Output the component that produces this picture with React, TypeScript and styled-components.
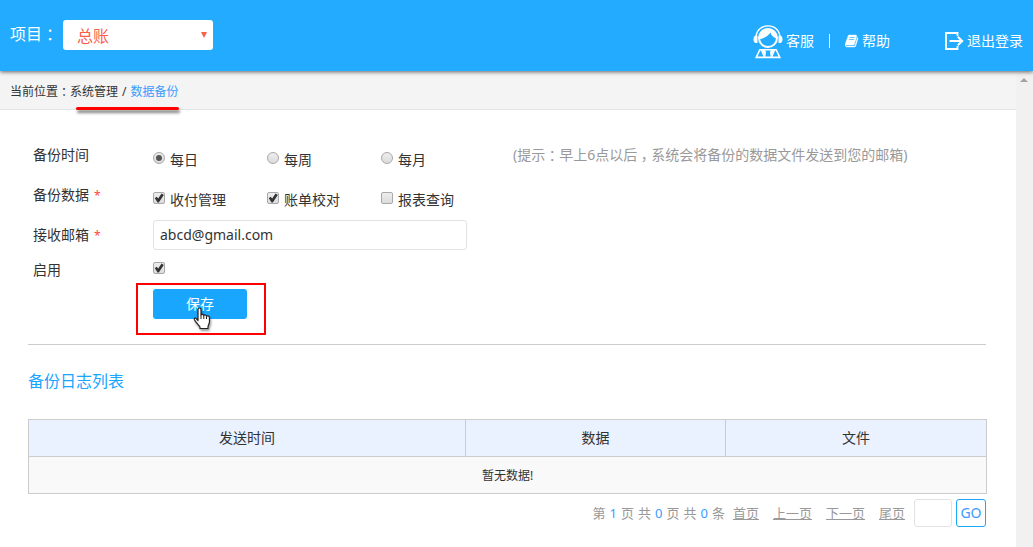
import React from "react";
import styled, { createGlobalStyle } from "styled-components";

const GlobalStyle = createGlobalStyle`
  *, *::before, *::after { box-sizing: border-box; }
  body {
    margin: 0;
    background: #fff;
    color: #333;
    font: 14px/20px "Noto Sans", "Noto Sans CJK SC", sans-serif;
  }
  a { color: inherit; text-decoration: none; }
  button, input, select { font: inherit; margin: 0; }
`;

const Page = styled.div`
  display: flex;
  flex-direction: column;
  min-height: 100vh;
`;

/* Full-width marks sit in the middle of their cell */
const Mark = styled.span`
  display: inline-block;
  width: 1em;
  text-align: center;
  font-feature-settings: "halt";
`;

const Header = styled.header`
  position: relative;
  display: flex;
  justify-content: space-between;
  align-items: flex-start;
  min-height: 71px;
  padding: 20px 10px 7px;
  background: #22abff;
  color: #fff;
  box-shadow: 0 1px 4px rgba(0, 0, 0, 0.6);
`;

const Project = styled.div`
  display: flex;
  align-items: flex-start;
  height: 30px;
  gap: 5px;
  font-size: 16px;
`;

const ProjectLabel = styled.label`
  line-height: 28px;
`;

const SelectBox = styled.div`
  position: relative;
  width: 150px;

  &::after {
    content: "";
    position: absolute;
    right: 6px;
    top: 12px;
    border: solid transparent;
    border-width: 6px 3px 0;
    border-top-color: #f9604c;
    pointer-events: none;
  }
`;

const Select = styled.select`
  appearance: none;
  display: block;
  width: 100%;
  height: 30px;
  padding: 2px 14px 0;
  border: 0;
  border-radius: 3px;
  background: #fff;
  color: #f9604c;
  font-size: 16px;
`;

const Tools = styled.nav`
  display: flex;
  align-items: center;
  height: 42px;
`;

const Tool = styled.a`
  display: flex;
  align-items: center;
  gap: 3px;

  & + & { margin-left: 55px; }
`;

const Bar = styled.span`
  width: 1px;
  height: 14px;
  margin: 0 15px;
  background: #fff;
`;

const Body = styled.div`
  display: flex;
  flex: 1;
`;

const Main = styled.main`
  flex: 1;
  min-width: 0;
`;

const Rail = styled.div`
  width: 17px;
  padding: 7px 4px;
  background: #f1f1f1;

  &::before {
    content: "";
    display: block;
    width: 8px;
    border: solid transparent;
    border-width: 0 4px 4px;
    border-bottom-color: #a3a3a3;
  }
`;

const Crumbs = styled.nav`
  display: flex;
  height: 39px;
  padding: 0 10px;
  border-bottom: 1px solid #e4e4e4;
  background: #f4f4f4;
  font-size: 12px;
  line-height: 42px;
  white-space: pre;
`;

const Trail = styled.span`
  position: relative;
  display: flex;
  gap: 4px;

  &::after {
    content: "";
    position: absolute;
    left: 6px;
    right: 0;
    top: 36px;
    height: 3px;
    border-radius: 2px;
    background: #f00;
    box-shadow: 1px 3px 3px rgba(0, 0, 0, 0.5);
  }
`;

const Current = styled.a`
  color: #3b9bff;
`;

const Content = styled.div`
  padding: 25px 29px 20px 28px;
`;

const Form = styled.form`
  margin-right: 1px;
  padding-bottom: 9px;
  border-bottom: 1px solid #ccc;
`;

const Row = styled.div<{ $height?: number }>`
  display: flex;
  align-items: center;
  height: ${(p) => p.$height ?? 40}px;
  padding-left: 5px;
`;

const Label = styled.label`
  width: 120px;
`;

const Star = styled.span`
  color: #f44;
  margin-left: 5px;
  font-size: 12px;
`;

const Options = styled.div`
  display: flex;
  width: 360px;
  padding-top: 10px;
`;

const Option = styled.label`
  display: flex;
  align-items: center;
  width: 114px;
  gap: 5px;
`;

const Tick = styled.input`
  appearance: none;
  flex: none;
  position: relative;
  width: 12px;
  height: 12px;
  margin-bottom: 4px;
  border: 1px solid #a8a8a8;
  border-radius: ${(p) => (p.type === "radio" ? "50%" : "2px")};
  background: linear-gradient(#ededed, #dcdcdc);

  &:checked::before {
    content: "";
    position: absolute;
    ${(p) =>
      p.type === "radio"
        ? "inset: 2px; border-radius: 50%; background: #555;"
        : "inset: 0; background: #333; clip-path: polygon(8% 52%, 26% 38%, 42% 56%, 76% 4%, 98% 20%, 48% 94%, 36% 94%);"}
  }
`;

const Hint = styled.span`
  color: #999;
  white-space: nowrap;
`;

const Email = styled.input`
  width: 314px;
  height: 30px;
  padding: 0 6px 2px;
  border: 1px solid #e2e2e2;
  border-radius: 3px;
  color: #333;
`;

const SaveArea = styled.div`
  position: relative;
  align-self: flex-start;
  margin: 4px 0 0 120px;

  &::before {
    content: "";
    position: absolute;
    inset: -6px -19px -16px -17px;
    border: 2px solid #f00;
  }
`;

const Save = styled.button`
  position: relative;
  display: block;
  width: 94px;
  height: 30px;
  padding: 0;
  border: 0;
  border-radius: 3px;
  background: #18a6ff;
  color: #fff;
`;

const Pointer = styled.svg`
  position: absolute;
  left: 40px;
  top: 18px;
  filter: drop-shadow(1px 2px 1px rgba(0, 0, 0, 0.4));
`;

const Title = styled.h2`
  margin: 24px 0 26px;
  color: #18a6ff;
  font-size: 16px;
  font-weight: 400;
  line-height: 24px;
`;

const Table = styled.table`
  width: 100%;
  table-layout: fixed;
  border-collapse: collapse;
  text-align: center;
`;

const Th = styled.th<{ $width?: string }>`
  width: ${(p) => p.$width ?? "auto"};
  height: 37px;
  padding: 0;
  border: 1px solid #ccc;
  background: #eaf1ff;
  font-weight: 400;
`;

const Td = styled.td`
  height: 37px;
  padding: 2px 0 0;
  border: 1px solid #ccc;
  background: #f9f9f9;
  font-size: 12px;
`;

const Pager = styled.div`
  display: flex;
  justify-content: flex-end;
  align-items: center;
  margin: 5px 1px 0 0;
  color: #999;
  font-size: 13px;
`;

const Counts = styled.span`
  display: flex;
  gap: 4px;
  margin-right: 8px;
`;

const Count = styled.span`
  color: #3b9bff;
`;

const PageLinks = styled.span`
  display: flex;
  gap: 14px;
  margin-right: 9px;

  a { text-decoration: underline; }
`;

const PageInput = styled.input`
  width: 38px;
  height: 28px;
  border: 1px solid #e2e2e2;
  border-radius: 3px;
`;

const Go = styled.button`
  width: 30px;
  height: 28px;
  margin-left: 4px;
  padding: 0;
  border: 1px solid #18a6ff;
  border-radius: 3px;
  background: #fff;
  color: #3b9bff;
  font-size: 14px;
`;

const AgentIcon = () => (
  <svg width="30" height="36" viewBox="0 -2 30 36" fill="none" stroke="#fff" aria-hidden="true">
    <path d="M3 12.500C3.200 5.400 8.400.9 15 .9s11.800 4.500 12 11.600" strokeWidth="1.400" />
    <circle cx="15" cy="13" r="9" strokeWidth="2" />
    <path d="M6.500 14c3.200-.4 6-1.400 8.200-3.400 1.200-1 2.200-2 2.800-3 .6 2.800 2.600 4.800 6 6C23.500 7.500 20 3.600 15 3.600S6.500 7.500 6.500 14z" fill="#fff" stroke="none" />
    <path d="M4.500 10.800H3C1.200 10.800.5 12.300.5 14.300s.7 3.700 2.500 3.700h1.500zM25.500 10.800H27c1.800 0 2.500 1.500 2.500 3.500s-.7 3.700-2.500 3.700h-1.500z" fill="#fff" stroke="none" />
    <path d="M6.800 24.800h16.400l3.600 7.600H3.200z" strokeWidth="1.600" />
    <path d="M8.500 25l3.200 7.500M21.500 25l-3.200 7.500" strokeWidth="1.600" />
    <path d="M9 24.200l3.200 8.300L13 27l-1.500-2.800zM21 24.200l-3.200 8.300L17 27l1.500-2.800z" fill="#fff" stroke="none" />
  </svg>
);

const BookIcon = () => (
  <svg width="14" height="14" viewBox="0 0 1792 1792" fill="#fff" stroke="#fff" strokeWidth="50" aria-hidden="true">
    <path d="M1639 478q40 57 18 129l-275 906q-19 64-76.500 107.500t-122.500 43.500h-923q-77 0-148.500-53.500t-99.500-131.500q-24-67-2-127 0-4 3-27t4-37q1-8-3-21.500t-3-19.500q2-11 8-21t16.500-23.500 16.500-23.500q23-38 45-91.500t30-91.500q3-10 .5-30t-.5-28q3-11 17-28t17-23q21-36 42-92t25-90q1-9-2.500-32t.5-28q4-13 22-30.500t22-22.500q19-26 42.500-84.500t27.500-96.500q1-8-3-25.500t-2-26.500q2-8 9-18t18-23 17-21q8-12 16.500-30.500t15-35 16-36 19.500-32 26.500-23.500 36-11.500 47.500 5.500l-1 3q38-9 51-9h761q74 0 114 56t18 130l-274 906q-36 119-71.500 153.500t-128.500 34.500h-869q-27 0-38 15-11 16-1 43 24 70 144 70h923q29 0 56-15.500t35-41.500l300-987q7-22 5-57 38 15 59 43zm-1064 2q-4 13 2 22.500t20 9.500h608q13 0 25.500-9.500t16.500-22.500l21-64q4-13-2-22.500t-20-9.500h-608q-13 0-25.500 9.500t-16.500 22.500zm-83 256q-4 13 2 22.500t20 9.500h608q13 0 25.500-9.500t16.500-22.500l21-64q4-13-2-22.500t-20-9.500h-608q-13 0-25.500 9.500t-16.500 22.500z" />
  </svg>
);

const ExitIcon = () => (
  <svg width="19" height="18" viewBox="0 0 19 18" fill="none" stroke="#fff" aria-hidden="true">
    <path d="M12.500 4V1H1v16h11.500v-3" strokeWidth="1.800" />
    <path d="M4.500 9H17M12.800 4.800L17.200 9l-4.400 4.200" strokeWidth="2" />
  </svg>
);

const HandPointer = () => (
  <Pointer width="18" height="23" viewBox="0 0 18 23" aria-hidden="true">
    <path
      d="M5 13.500V2.600C5 1.400 5.600 1 6.400 1S8 1.500 8 2.600V8c.2-.8 2.500-.9 2.800.6.4-1 2.500-.8 2.700.7.500-.8 2.700-.6 2.900.9l.1 4.300c0 2.300-1.500 3.500-1.500 5.500v1.500H7V20c-1.200-2-4-4.500-5.600-7.300C.7 11.400 2 10.600 3 11.300z"
      fill="#fff"
      stroke="#222"
      strokeWidth="1.200"
      strokeLinejoin="round"
    />
    <path d="M8 8v4M10.800 9v3M13.500 9.500V12" stroke="#222" strokeWidth="1" fill="none" />
  </Pointer>
);

const schedules = ["每日", "每周", "每月"];
const sources = [
  { name: "收付管理", checked: true },
  { name: "账单校对", checked: true },
  { name: "报表查询", checked: false },
];

export default function App() {
  return (
    <Page>
      <GlobalStyle />
      <Header>
        <Project>
          <ProjectLabel htmlFor="project">
            项目<Mark>：</Mark>
          </ProjectLabel>
          <SelectBox>
            <Select id="project">
              <option>总账</option>
            </Select>
          </SelectBox>
        </Project>
        <Tools>
          <Tool href="#service">
            <AgentIcon />
            客服
          </Tool>
          <Bar />
          <Tool href="#help">
            <BookIcon />
            帮助
          </Tool>
          <Tool href="#logout">
            <ExitIcon />
            退出登录
          </Tool>
        </Tools>
      </Header>
      <Body>
        <Main>
          <Crumbs>
            <span>
              当前位置<Mark>：</Mark>
            </span>
            <Trail>
              <a href="#system">系统管理</a>
              <span>/</span>
              <Current href="#backup">数据备份</Current>
            </Trail>
          </Crumbs>
          <Content>
            <Form onSubmit={(e) => e.preventDefault()}>
              <Row role="radiogroup" aria-labelledby="time-label">
                <Label as="span" id="time-label">备份时间</Label>
                <Options>
                  {schedules.map((name, i) => (
                    <Option key={name}>
                      <Tick type="radio" name="schedule" defaultChecked={i === 0} />
                      {name}
                    </Option>
                  ))}
                </Options>
                <Hint>
                  (提示<Mark>：</Mark>早上6点以后<Mark>，</Mark>系统会将备份的数据文件发送到您的邮箱)
                </Hint>
              </Row>
              <Row role="group" aria-labelledby="data-label">
                <Label as="span" id="data-label">
                  备份数据<Star>*</Star>
                </Label>
                <Options>
                  {sources.map((s) => (
                    <Option key={s.name}>
                      <Tick type="checkbox" defaultChecked={s.checked} />
                      {s.name}
                    </Option>
                  ))}
                </Options>
              </Row>
              <Row>
                <Label htmlFor="email">
                  接收邮箱<Star>*</Star>
                </Label>
                <Email id="email" type="email" defaultValue="abcd@gmail.com" />
              </Row>
              <Row $height={30}>
                <Label htmlFor="enabled">启用</Label>
                <Tick id="enabled" type="checkbox" defaultChecked />
              </Row>
              <Row $height={50}>
                <SaveArea>
                  <Save type="submit">保存</Save>
                  <HandPointer />
                </SaveArea>
              </Row>
            </Form>
            <Title>备份日志列表</Title>
            <Table>
              <thead>
                <tr>
                  <Th>发送时间</Th>
                  <Th $width="260px">数据</Th>
                  <Th $width="261px">文件</Th>
                </tr>
              </thead>
              <tbody>
                <tr>
                  <Td colSpan={3}>暂无数据!</Td>
                </tr>
              </tbody>
            </Table>
            <Pager>
              <Counts>
                <span>第</span>
                <Count>1</Count>
                <span>页</span>
                <span>共</span>
                <Count>0</Count>
                <span>页</span>
                <span>共</span>
                <Count>0</Count>
                <span>条</span>
              </Counts>
              <PageLinks>
                <a href="#first">首页</a>
                <a href="#prev">上一页</a>
                <a href="#next">下一页</a>
                <a href="#last">尾页</a>
              </PageLinks>
              <PageInput type="text" aria-label="页码" />
              <Go type="button">GO</Go>
            </Pager>
          </Content>
        </Main>
        <Rail />
      </Body>
    </Page>
  );
}
